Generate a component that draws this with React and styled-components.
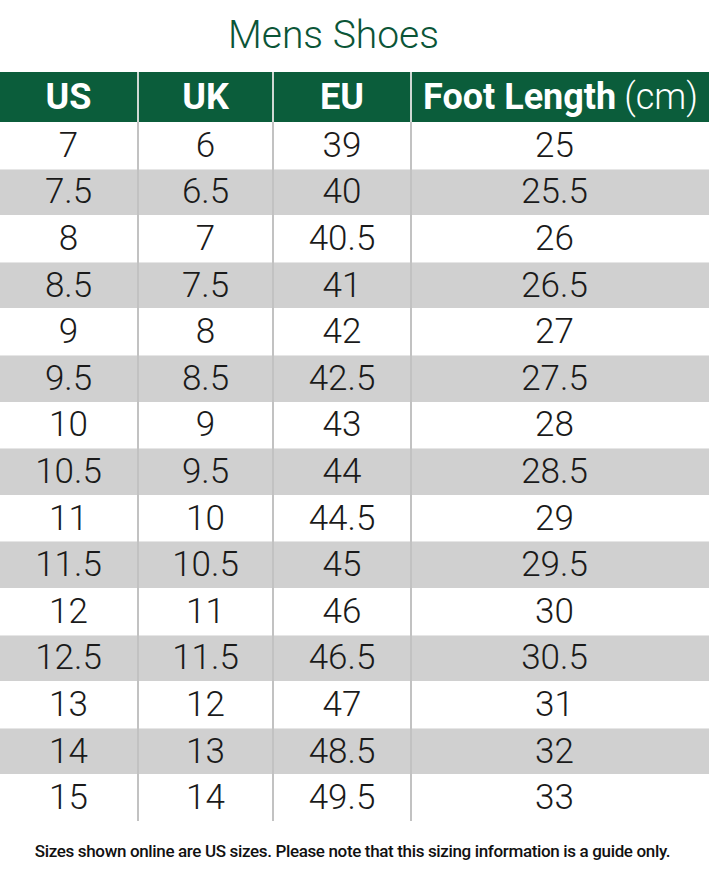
import React from 'react';
import styled, { createGlobalStyle } from 'styled-components';

const GlobalStyle = createGlobalStyle`
  html, body {
    margin: 0;
    padding: 0;
    background: #ffffff;
  }
  body {
    font-family: Roboto, "Liberation Sans", sans-serif;
  }
`;

const Page = styled.div`
  width: 709px;
  height: 872px;
  display: flex;
  flex-direction: column;
  background: #ffffff;
`;

const Title = styled.h1`
  margin: 0;
  height: 72px;
  display: flex;
  align-items: center;
  justify-content: center;
  padding-right: 42px;
  padding-bottom: 2px;
  box-sizing: border-box;
  font-family: Roboto, sans-serif;
  font-weight: 300;
  font-size: 39px;
  color: #0b5537;
`;

const Table = styled.div`
  display: grid;
  grid-template-columns: 137px 135px 138px 1fr;
`;

const HeadCell = styled.div`
  height: 50px;
  display: flex;
  align-items: center;
  justify-content: center;
  background: #0b5d3b;
  color: #ffffff;
  font-size: 36px;
  font-weight: 700;
  border-left: ${p => (p.first ? 'none' : '2px solid #cfd8d3')};
`;

const Unit = styled.span`
  font-weight: 300;
  margin-left: 8px;
`;

const Cell = styled.div`
  height: 46.6px;
  box-sizing: border-box;
  display: flex;
  align-items: center;
  justify-content: center;
  padding-right: ${p => (p.last ? '12px' : '0')};
  background: ${p => (p.shaded ? '#d0d0d0' : '#ffffff')};
  color: #1a1a1a;
  font-size: 35px;
  font-weight: 300;
  border-left: ${p => (p.first ? 'none' : '2px solid #c2c2c2')};
  box-shadow: ${p => (p.shaded ? 'inset 0 1px 0 #e6e6e6' : 'none')};
`;

const Note = styled.p`
  margin: 0;
  flex: 1;
  display: flex;
  align-items: center;
  justify-content: center;
  padding-top: 10px;
  padding-right: 4px;
  font-family: Roboto, sans-serif;
  font-weight: 500;
  font-size: 17px;
  letter-spacing: -0.35px;
  color: #111111;
`;

const rows = [
  ['7', '6', '39', '25'],
  ['7.5', '6.5', '40', '25.5'],
  ['8', '7', '40.5', '26'],
  ['8.5', '7.5', '41', '26.5'],
  ['9', '8', '42', '27'],
  ['9.5', '8.5', '42.5', '27.5'],
  ['10', '9', '43', '28'],
  ['10.5', '9.5', '44', '28.5'],
  ['11', '10', '44.5', '29'],
  ['11.5', '10.5', '45', '29.5'],
  ['12', '11', '46', '30'],
  ['12.5', '11.5', '46.5', '30.5'],
  ['13', '12', '47', '31'],
  ['14', '13', '48.5', '32'],
  ['15', '14', '49.5', '33'],
];

export default function App() {
  return (
    <Page>
      <GlobalStyle />
      <Title>Mens Shoes</Title>
      <Table>
        <HeadCell first>US</HeadCell>
        <HeadCell>UK</HeadCell>
        <HeadCell>EU</HeadCell>
        <HeadCell>
          Foot Length<Unit>(cm)</Unit>
        </HeadCell>
        {rows.map((row, i) =>
          row.map((value, j) => (
            <Cell
              key={`${i}-${j}`}
              first={j === 0}
              last={j === row.length - 1}
              shaded={i % 2 === 1}
            >
              {value}
            </Cell>
          ))
        )}
      </Table>
      <Note>
        Sizes shown online are US sizes. Please note that this sizing information is a guide only.
      </Note>
    </Page>
  );
}
